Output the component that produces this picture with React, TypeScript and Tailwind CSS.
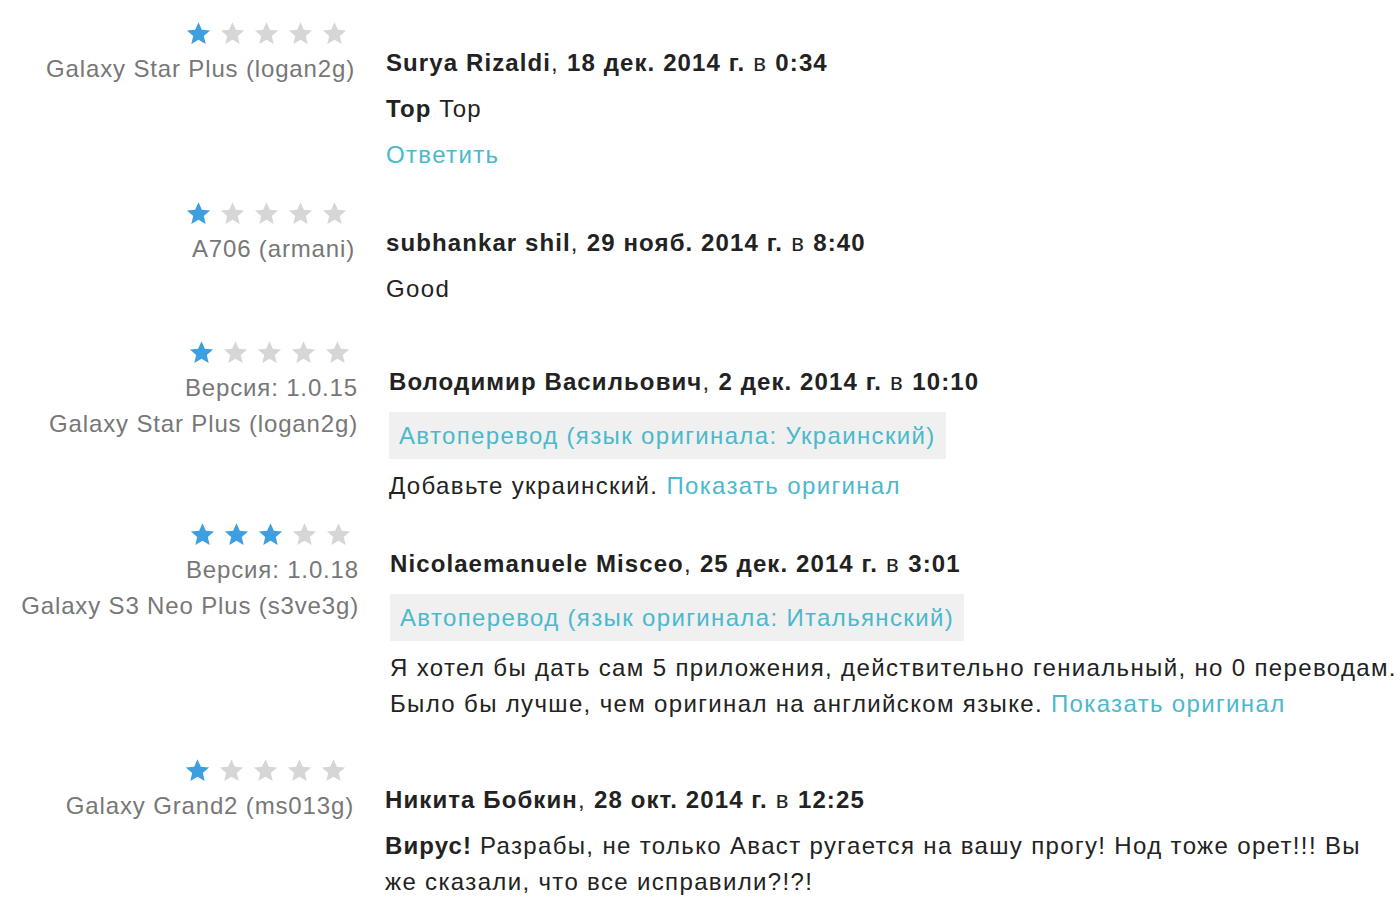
import React from "react";

type Review = {
  stars: number;
  version?: string;
  device: string;
  author: string;
  date: string;
  time: string;
  title?: string;
  lines: string[];
  translated?: string;
  showOriginal?: boolean;
  reply?: boolean;
  left: string;
  gap: string;
};

const reviews: Review[] = [
  {
    stars: 1,
    device: "Galaxy Star Plus (logan2g)",
    author: "Surya Rizaldi",
    date: "18 дек. 2014 г.",
    time: "0:34",
    title: "Top",
    lines: ["Top"],
    reply: true,
    left: "w-[355px]",
    gap: "mt-0",
  },
  {
    stars: 1,
    device: "A706 (armani)",
    author: "subhankar shil",
    date: "29 нояб. 2014 г.",
    time: "8:40",
    lines: ["Good"],
    left: "w-[355px]",
    gap: "mt-[27px]",
  },
  {
    stars: 1,
    version: "1.0.15",
    device: "Galaxy Star Plus (logan2g)",
    author: "Володимир Васильович",
    date: "2 дек. 2014 г.",
    time: "10:10",
    translated: "Украинский",
    lines: ["Добавьте украинский."],
    showOriginal: true,
    left: "w-[358px]",
    gap: "mt-[32px]",
  },
  {
    stars: 3,
    version: "1.0.18",
    device: "Galaxy S3 Neo Plus (s3ve3g)",
    author: "Nicolaemanuele Misceo",
    date: "25 дек. 2014 г.",
    time: "3:01",
    translated: "Итальянский",
    lines: [
      "Я хотел бы дать сам 5 приложения, действительно гениальный, но 0 переводам.",
      "Было бы лучше, чем оригинал на английском языке.",
    ],
    showOriginal: true,
    left: "w-[359px]",
    gap: "mt-[17px]",
  },
  {
    stars: 1,
    device: "Galaxy Grand2 (ms013g)",
    author: "Никита Бобкин",
    date: "28 окт. 2014 г.",
    time: "12:25",
    title: "Вирус!",
    lines: ["Разрабы, не только Аваст ругается на вашу прогу! Нод тоже орет!!! Вы", "же сказали, что все исправили?!?!"],
    left: "w-[354px]",
    gap: "mt-[35px]",
  },
];

function Star({ on }: { on: boolean }) {
  return (
    <svg viewBox="0 0 24 24" className="h-[25px] w-[25px]">
      <path
        d="M12 1.2l3.2 7.3 7.9.6-6 5.2 1.8 7.8L12 18l-6.9 4.1 1.8-7.8-6-5.2 7.9-.6z"
        fill={on ? "#3d9ee0" : "#d6d6d6"}
      />
    </svg>
  );
}

function Stars({ count }: { count: number }) {
  return (
    <div className="mr-[8px] flex h-[26px] items-center justify-end gap-[9px]">
      {[1, 2, 3, 4, 5].map((i) => (
        <Star key={i} on={i <= count} />
      ))}
    </div>
  );
}

function ReviewRow({ r }: { r: Review }) {
  const bold = "font-bold tracking-[1.1px]";
  return (
    <div className={`flex ${r.gap}`}>
      <div className={`${r.left} shrink-0 text-right text-[24px] leading-[36px] tracking-[0.85px] text-[#777]`}>
        <Stars count={r.stars} />
        <div className="mt-[5px] whitespace-nowrap">
          {r.version && <div>Версия: {r.version}</div>}
          <div>{r.device}</div>
        </div>
      </div>
      <div className="ml-[31px] pt-[25px] text-[24px] leading-[36px] tracking-[1.35px] text-[#222]">
        <div className="mb-[10px] whitespace-nowrap">
          <span className={bold}>{r.author}</span>, <span className={bold}>{r.date}</span> в{" "}
          <span className={bold}>{r.time}</span>
        </div>
        {r.translated && (
          <div className="mt-[2px] mb-[9px] inline-flex h-[47px] items-center whitespace-nowrap bg-[#f0f0f0] px-[10px] text-[#4bb8cc]">
            Автоперевод (язык оригинала: {r.translated})
          </div>
        )}
        <div className="whitespace-nowrap">
          {r.lines.map((line, i) => (
            <div key={i}>
              {i === 0 && r.title && <span className={bold}>{r.title} </span>}
              {line}
              {i === r.lines.length - 1 && r.showOriginal && (
                <span className="text-[#4bb8cc]"> Показать оригинал</span>
              )}
            </div>
          ))}
        </div>
        {r.reply && <div className="mt-[10px] text-[#4bb8cc]">Ответить</div>}
      </div>
    </div>
  );
}

export default function App() {
  return (
    <main className="min-h-[910px] w-[1400px] overflow-hidden bg-white pt-[20px] font-['Liberation_Sans',Arial,sans-serif]">
      {reviews.map((r, i) => (
        <ReviewRow key={i} r={r} />
      ))}
    </main>
  );
}
